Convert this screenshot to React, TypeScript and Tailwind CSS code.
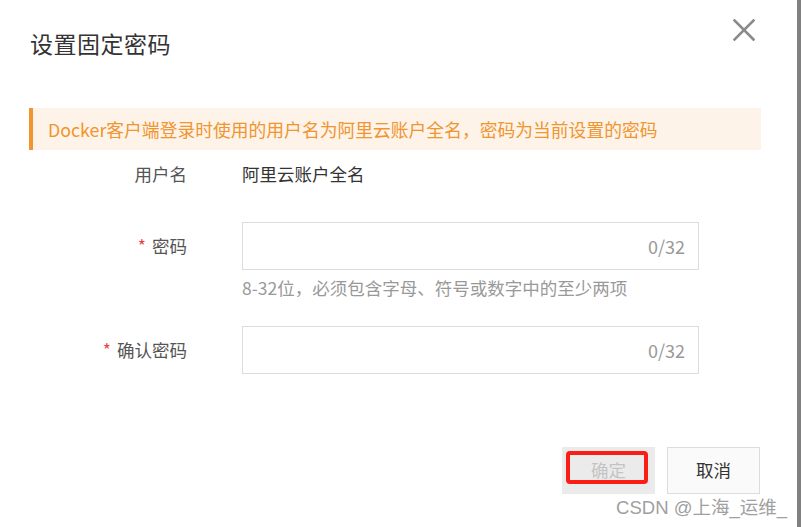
import React from 'react';

const font = { fontFamily: '"Noto Sans CJK SC", "Noto Sans", sans-serif' };

const CloseIcon: React.FC = () => (
  <svg width="22" height="22" viewBox="0 0 22 22" className="text-[#8a8a8a]">
    <path d="M1.5 1.5 L20.5 20.5 M20.5 1.5 L1.5 20.5" stroke="currentColor" strokeWidth="2.6" strokeLinecap="square" />
  </svg>
);

const CountInput: React.FC = () => (
  <div className="w-[457px] h-[48px] border border-[#dcdcdc] bg-white flex items-center justify-end pr-[13px]">
    <span className="text-[18px] text-[#999999]">0/32</span>
  </div>
);

const App: React.FC = () => {
  return (
    <div className="w-[801px] h-[527px] bg-white flex overflow-hidden" style={font}>
      <div className="flex-1 relative">
        {/* Header */}
        <div className="flex justify-between items-start pl-[30px] pr-[42px]">
          <h2 className="text-[23px] leading-[34px] text-[#333333] mt-[26px] tracking-[0.5px]">设置固定密码</h2>
          <button className="mt-[19px]">
            <CloseIcon />
          </button>
        </div>

        {/* Notice */}
        <div className="ml-[29px] mt-[48px] w-[732px] h-[42px] bg-[#fdf3e8] border-l-4 border-[#f0952f] flex items-center pl-[15px]">
          <span className="text-[17.8px] text-[#f0952f]">Docker客户端登录时使用的用户名为阿里云账户全名，密码为当前设置的密码</span>
        </div>

        {/* Form */}
        <div className="pl-[29px] mt-[6px] flex flex-col">
          <div className="flex items-center h-[36px]">
            <div className="w-[158px] text-right text-[17.5px] text-[#555555]">用户名</div>
            <div className="ml-[55px] text-[17.5px] text-[#333333]">阿里云账户全名</div>
          </div>

          <div className="flex items-start mt-[30px]">
            <div className="w-[158px] h-[48px] flex items-center justify-end text-[17.5px] text-[#555555]">
              <span className="text-[#e5433f] mr-[6px]">*</span>密码
            </div>
            <div className="ml-[55px] flex flex-col">
              <CountInput />
              <div className="mt-[3px] text-[17.5px] text-[#999999] leading-[30px]">8-32位，必须包含字母、符号或数字中的至少两项</div>
            </div>
          </div>

          <div className="flex items-start mt-[23px]">
            <div className="w-[158px] h-[48px] flex items-center justify-end text-[17.5px] text-[#555555]">
              <span className="text-[#e5433f] mr-[6px]">*</span>确认密码
            </div>
            <div className="ml-[55px]">
              <CountInput />
            </div>
          </div>
        </div>

        {/* Footer */}
        <div className="flex justify-end gap-[12px] pr-[37px] mt-[73px]">
          <button className="relative w-[93px] h-[47px] bg-[#ebebeb] text-[17.5px] text-[#c4c4c4]">
            确定
            <span className="absolute left-[4px] top-[4px] w-[82px] h-[33px] border-[4px] border-[#fa1e14] rounded-[4px]" />
          </button>
          <button className="w-[93px] h-[47px] bg-[#fafafa] border border-[#dcdcdc] text-[17.5px] text-[#333333]">取消</button>
        </div>

        {/* Watermark */}
        <div
          className="absolute right-[10px] bottom-[7px] text-[18.5px] leading-[24px] text-[#a0a0a0]"
          style={{ fontFamily: '"Liberation Sans", "Noto Sans CJK SC", sans-serif', textShadow: '0 0 2px #fff' }}
        >
          CSDN @上海_运维_
        </div>
      </div>
      <div className="w-[4px] h-full bg-[#808080]" />
    </div>
  );
};

export default App;
